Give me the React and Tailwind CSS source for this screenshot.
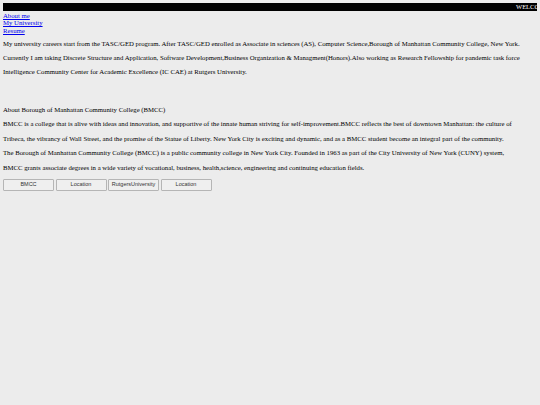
const links = ['About me', 'My University', 'Resume'];

const intro = [
  'My university careers start from the TASC/GED program. After TASC/GED enrolled as Associate in sciences (AS), Computer Science,Borough of Manhattan Community College, New York.',
  'Currently I am taking Discrete Structure and Application, Software Development,Business Organization & Managment(Honors).Also working as Research Fellowship for pandemic task force',
  'Intelligence Community Center for Academic Excellence (IC CAE) at Rutgers University.',
];

const about = [
  'BMCC is a college that is alive with ideas and innovation, and supportive of the innate human striving for self-improvement.BMCC reflects the best of downtown Manhattan: the culture of',
  'Tribeca, the vibrancy of Wall Street, and the promise of the Statue of Liberty. New York City is exciting and dynamic, and as a BMCC student become an integral part of the community.',
  'The Borough of Manhattan Community College (BMCC) is a public community college in New York City. Founded in 1963 as part of the City University of New York (CUNY) system,',
  'BMCC grants associate degrees in a wide variety of vocational, business, health,science, engineering and continuing education fields.',
];

const buttons = ['BMCC', 'Location', 'RutgersUniversity', 'Location'];

export default function App() {
  return (
    <div className="min-h-screen bg-[#ececec] p-[3px] text-[6.75px] text-black font-['Liberation_Serif',serif]">
      {/* welcome marquee */}
      <div className="h-[8px] bg-black text-white text-[6.5px] leading-[8px] overflow-hidden whitespace-nowrap pl-[513px]">
        WELCOME
      </div>

      <nav className="flex flex-col leading-[7.5px] mt-[0.5px]">
        {links.map((l) => (
          <a key={l} href="#" className="text-[#0000ee] underline w-fit">
            {l}
          </a>
        ))}
      </nav>

      <div className="mt-[3px] leading-[14px]">
        {intro.map((t, i) => (
          <div key={i} className="whitespace-nowrap">{t}</div>
        ))}
      </div>

      <div className="mt-[24px] leading-[14.4px]">
        <div>About Borough of Manhattan Community College (BMCC)</div>
        {about.map((t, i) => (
          <div key={i} className="whitespace-nowrap">{t}</div>
        ))}
      </div>

      <div className="flex gap-[1.5px] mt-[4px]">
        {buttons.map((b, i) => (
          <button
            key={i}
            className="w-[51px] h-[12px] bg-[#efefef] border border-[#b5b5b5] rounded-[1px] text-[5.5px] leading-none text-[#333] font-['Liberation_Sans',sans-serif]"
          >
            {b}
          </button>
        ))}
      </div>
    </div>
  );
}
